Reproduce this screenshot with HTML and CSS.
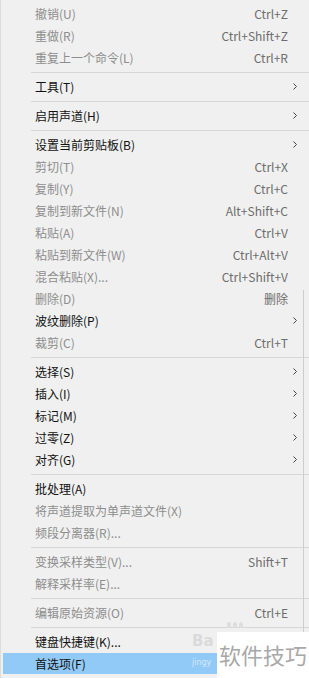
FILE: index.html
```html
<!DOCTYPE html>
<html lang="zh-CN">
<head>
    <meta charset="UTF-8">
    <meta name="viewport" content="width=device-width, initial-scale=1.0">
    <title>编辑菜单</title>
    <link rel="stylesheet" href="styles.css">
</head>
<body>
    <div class="menu">
        <div class="item disabled"><span class="label">撤销(U)</span><span class="key">Ctrl+Z</span></div>
        <div class="item disabled"><span class="label">重做(R)</span><span class="key">Ctrl+Shift+Z</span></div>
        <div class="item disabled"><span class="label">重复上一个命令(L)</span><span class="key">Ctrl+R</span></div>
        <div class="sep"></div>
        <div class="item"><span class="label">工具(T)</span><svg class="arrow" width="4" height="7" viewBox="0 0 4 7"><path d="M0.5 0.5 L3.5 3.5 L0.5 6.5" fill="none" stroke="#444" stroke-width="1"/></svg></div>
        <div class="sep"></div>
        <div class="item"><span class="label">启用声道(H)</span><svg class="arrow" width="4" height="7" viewBox="0 0 4 7"><path d="M0.5 0.5 L3.5 3.5 L0.5 6.5" fill="none" stroke="#444" stroke-width="1"/></svg></div>
        <div class="sep"></div>
        <div class="item"><span class="label">设置当前剪贴板(B)</span><svg class="arrow" width="4" height="7" viewBox="0 0 4 7"><path d="M0.5 0.5 L3.5 3.5 L0.5 6.5" fill="none" stroke="#444" stroke-width="1"/></svg></div>
        <div class="item disabled"><span class="label">剪切(T)</span><span class="key">Ctrl+X</span></div>
        <div class="item disabled"><span class="label">复制(Y)</span><span class="key">Ctrl+C</span></div>
        <div class="item disabled"><span class="label">复制到新文件(N)</span><span class="key">Alt+Shift+C</span></div>
        <div class="item disabled"><span class="label">粘贴(A)</span><span class="key">Ctrl+V</span></div>
        <div class="item disabled"><span class="label">粘贴到新文件(W)</span><span class="key">Ctrl+Alt+V</span></div>
        <div class="item disabled"><span class="label">混合粘贴(X)...</span><span class="key">Ctrl+Shift+V</span></div>
        <div class="item disabled"><span class="label">删除(D)</span><span class="key">删除</span></div>
        <div class="item"><span class="label">波纹删除(P)</span><svg class="arrow" width="4" height="7" viewBox="0 0 4 7"><path d="M0.5 0.5 L3.5 3.5 L0.5 6.5" fill="none" stroke="#444" stroke-width="1"/></svg></div>
        <div class="item disabled"><span class="label">裁剪(C)</span><span class="key">Ctrl+T</span></div>
        <div class="sep"></div>
        <div class="item"><span class="label">选择(S)</span><svg class="arrow" width="4" height="7" viewBox="0 0 4 7"><path d="M0.5 0.5 L3.5 3.5 L0.5 6.5" fill="none" stroke="#444" stroke-width="1"/></svg></div>
        <div class="item"><span class="label">插入(I)</span><svg class="arrow" width="4" height="7" viewBox="0 0 4 7"><path d="M0.5 0.5 L3.5 3.5 L0.5 6.5" fill="none" stroke="#444" stroke-width="1"/></svg></div>
        <div class="item"><span class="label">标记(M)</span><svg class="arrow" width="4" height="7" viewBox="0 0 4 7"><path d="M0.5 0.5 L3.5 3.5 L0.5 6.5" fill="none" stroke="#444" stroke-width="1"/></svg></div>
        <div class="item"><span class="label">过零(Z)</span><svg class="arrow" width="4" height="7" viewBox="0 0 4 7"><path d="M0.5 0.5 L3.5 3.5 L0.5 6.5" fill="none" stroke="#444" stroke-width="1"/></svg></div>
        <div class="item"><span class="label">对齐(G)</span><svg class="arrow" width="4" height="7" viewBox="0 0 4 7"><path d="M0.5 0.5 L3.5 3.5 L0.5 6.5" fill="none" stroke="#444" stroke-width="1"/></svg></div>
        <div class="sep"></div>
        <div class="item"><span class="label">批处理(A)</span></div>
        <div class="item disabled"><span class="label">将声道提取为单声道文件(X)</span></div>
        <div class="item disabled"><span class="label">频段分离器(R)...</span></div>
        <div class="sep"></div>
        <div class="item disabled"><span class="label">变换采样类型(V)...</span><span class="key">Shift+T</span></div>
        <div class="item disabled"><span class="label">解释采样率(E)...</span></div>
        <div class="sep"></div>
        <div class="item disabled"><span class="label">编辑原始资源(O)</span><span class="key">Ctrl+E</span></div>
        <div class="sep"></div>
        <div class="item"><span class="label">键盘快捷键(K)...</span></div>
        <div class="item active"><span class="label">首选项(F)</span></div>

        <div class="edge"></div>
        <div class="mark-logo">Ba</div>
        <div class="mark-paw"><i></i><i></i><i></i></div>
        <div class="mark-site">jingy</div>
        <div class="mark-box">软件技巧</div>
    </div>
</body>
</html>
```

FILE: styles.css
```css
body {
    margin: 0;
    background-color: #f0f0f0;
    font-family: "Noto Sans CJK SC", "Noto Sans", sans-serif;
    font-size: 12px;
}
.menu {
    position: relative;
    width: 309px;
    height: 678px;
    box-sizing: border-box;
    padding-top: 3px;
    background-color: #f0f0f0;
    border-left: 1px solid #dcdcdc;
    overflow: hidden;
}
.item {
    display: flex;
    align-items: center;
    box-sizing: border-box;
    height: 22px;
    padding-left: 34px;
    padding-right: 12px;
    padding-bottom: 1px;
    color: #111;
}
.item .label {
    flex: 1;
    white-space: nowrap;
}
.item .key {
    margin-right: 9px;
    color: #6d6d6d;
}
.item .arrow {
    display: block;
}
.item.disabled {
    color: #8d8d8d;
}
.item.active {
    margin-left: 2px;
    padding-left: 32px;
    height: 21px;
    background-color: #91c9f7;
}
.sep {
    height: 1px;
    margin: 3px 0 3px 30px;
    background-color: #d7d7d7;
}
.edge {
    position: absolute;
    left: 302px;
    top: 290px;
    bottom: 0;
    width: 1px;
    background-color: #cdcdcd;
}
.mark-logo {
    position: absolute;
    left: 191px;
    top: 632px;
    font-family: "DejaVu Sans", sans-serif;
    font-weight: bold;
    font-size: 15px;
    color: #dadada;
}
.mark-paw {
    position: absolute;
    left: 226px;
    top: 622px;
    display: flex;
    gap: 2px;
}
.mark-paw i {
    width: 4px;
    height: 6px;
    border-radius: 2px;
    background-color: #dedede;
}
.mark-site {
    position: absolute;
    left: 191px;
    top: 658px;
    font-family: "DejaVu Sans", sans-serif;
    font-size: 8px;
    color: #d6eafc;
}
.mark-box {
    position: absolute;
    left: 216px;
    top: 632px;
    right: 0;
    bottom: 0;
    padding-left: 2px;
    background-color: #fff;
    color: #a8a8a8;
    font-size: 22px;
    line-height: 44px;
    white-space: nowrap;
}
```
